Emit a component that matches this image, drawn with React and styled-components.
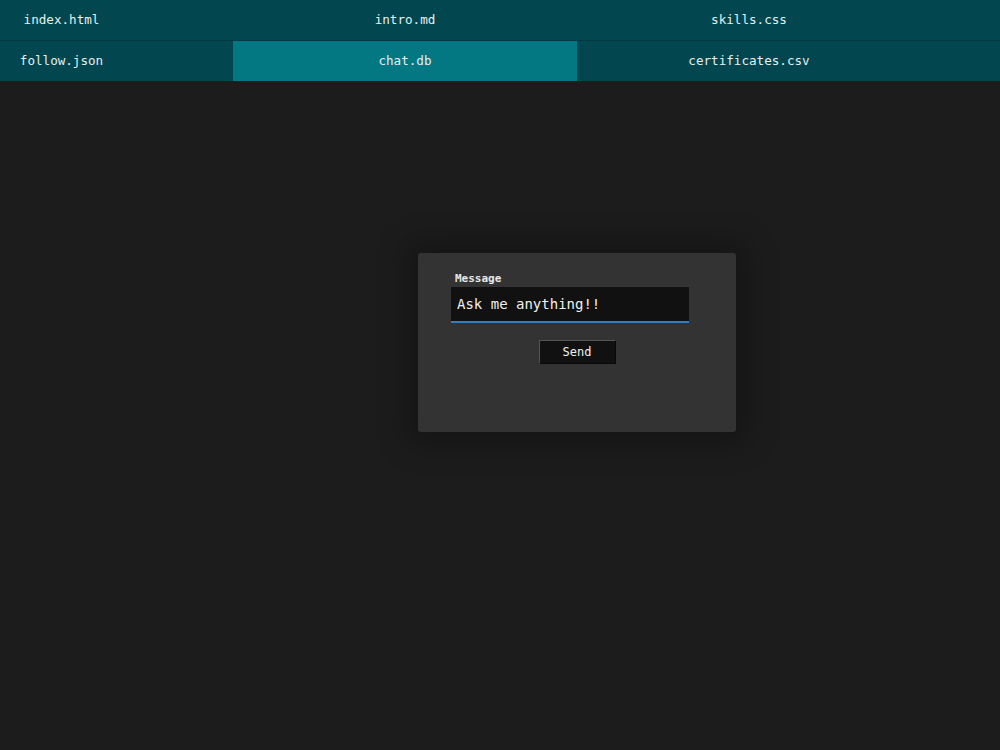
import styled, { createGlobalStyle } from "styled-components";

const GlobalStyle = createGlobalStyle`
  html, body {
    margin: 0;
    padding: 0;
    background: #1c1c1c;
    font-family: "DejaVu Sans Mono", "Liberation Mono", monospace;
  }
`;

const Page = styled.div`
  width: 1000px;
  height: 750px;
  background: #1c1c1c;
  display: flex;
  flex-direction: column;
`;

const TabGrid = styled.nav`
  display: grid;
  grid-template-columns: 233px 344px 1fr;
  grid-auto-rows: 40px;
  row-gap: 1px;
  background: #023a42;
`;

const Tab = styled.div`
  display: flex;
  align-items: center;
  justify-content: center;
  padding-right: ${({ first }) => (first ? "110px" : "0")};
  padding-bottom: 1px;
  background: ${({ active }) => (active ? "#037882" : "#02474f")};
  color: #e6eef0;
  font-size: 12.6px;
  cursor: pointer;
`;

const LastLabel = styled.span`
  margin-right: 79px;
`;

const Main = styled.main`
  flex: 1;
  padding: 172px 0 0 418px;
`;

const Card = styled.form`
  width: 318px;
  height: 179px;
  box-sizing: border-box;
  background: #333333;
  border-radius: 3px;
  box-shadow: 0 0 30px 12px rgba(0, 0, 0, 0.25);
  padding: 19px 0 0 33px;
  display: flex;
  flex-direction: column;
`;

const Label = styled.label`
  color: #e8e8e8;
  font-size: 11px;
  font-weight: bold;
  margin-left: 4px;
  margin-bottom: 2px;
`;

const Input = styled.input`
  width: 238px;
  height: 36px;
  box-sizing: border-box;
  background: #111111;
  border: none;
  border-bottom: 2px solid #2f7ec4;
  color: #f0f0f0;
  font-family: inherit;
  font-size: 14px;
  padding: 0 6px;
  outline: none;
  &::placeholder {
    color: #f0f0f0;
  }
`;

const ButtonRow = styled.div`
  width: 252px;
  display: flex;
  justify-content: center;
  margin-top: 17px;
`;

const SendButton = styled.button`
  width: 77px;
  height: 24px;
  box-sizing: border-box;
  background: #111111;
  color: #f0f0f0;
  font-family: inherit;
  font-size: 12px;
  border: 1px solid;
  border-color: #555555 #080808 #080808 #555555;
  cursor: pointer;
`;

const rows = [
  [{ name: "index.html" }, { name: "intro.md" }, { name: "skills.css" }],
  [
    { name: "follow.json" },
    { name: "chat.db", active: true },
    { name: "certificates.csv" },
  ],
];

export default function App() {
  return (
    <Page>
      <GlobalStyle />
      <TabGrid>
        {rows.flat().map((tab, i) => (
          <Tab key={tab.name} first={i % 3 === 0} active={tab.active}>
            {i % 3 === 2 ? <LastLabel>{tab.name}</LastLabel> : tab.name}
          </Tab>
        ))}
      </TabGrid>
      <Main>
        <Card onSubmit={(e) => e.preventDefault()}>
          <Label htmlFor="msg">Message</Label>
          <Input id="msg" placeholder="Ask me anything!!" />
          <ButtonRow>
            <SendButton type="submit">Send</SendButton>
          </ButtonRow>
        </Card>
      </Main>
    </Page>
  );
}
